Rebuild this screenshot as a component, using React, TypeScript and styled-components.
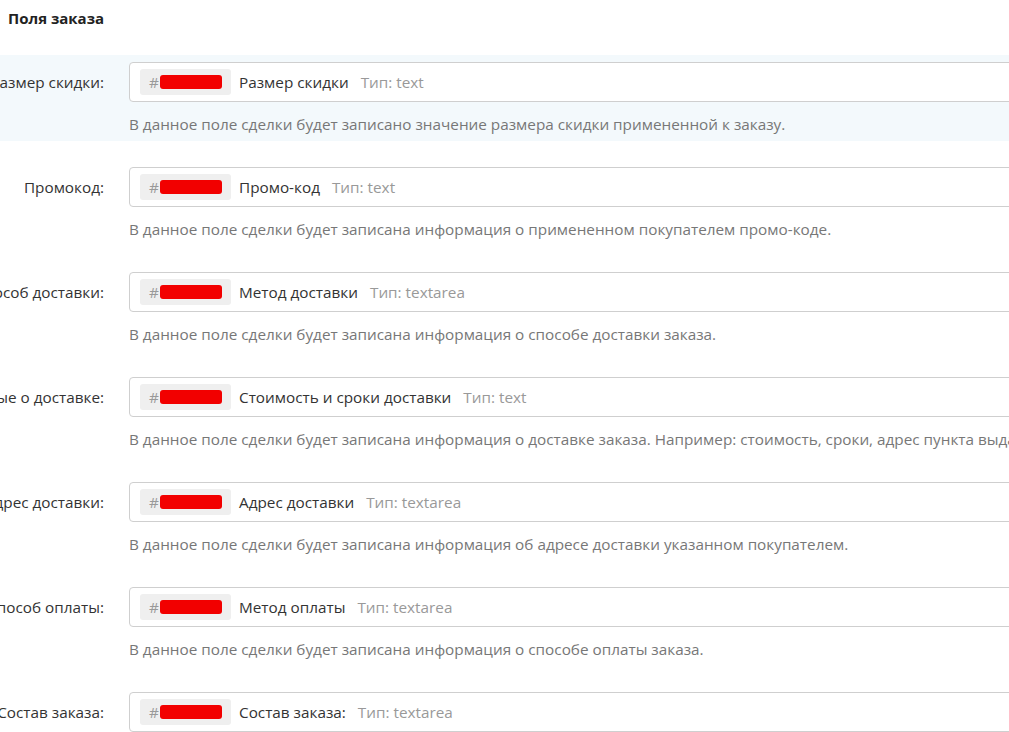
import React from "react"
import styled, { createGlobalStyle } from "styled-components"

type OrderField = {
  label: string
  name: string
  type: "text" | "textarea"
  hint: string
}

const fields: OrderField[] = [
  {
    label: "Размер скидки:",
    name: "Размер скидки",
    type: "text",
    hint: "В данное поле сделки будет записано значение размера скидки примененной к заказу.",
  },
  {
    label: "Промокод:",
    name: "Промо-код",
    type: "text",
    hint: "В данное поле сделки будет записана информация о примененном покупателем промо-коде.",
  },
  {
    label: "Способ доставки:",
    name: "Метод доставки",
    type: "textarea",
    hint: "В данное поле сделки будет записана информация о способе доставки заказа.",
  },
  {
    label: "Данные о доставке:",
    name: "Стоимость и сроки доставки",
    type: "text",
    hint: "В данное поле сделки будет записана информация о доставке заказа. Например: стоимость, сроки, адрес пункта выдачи.",
  },
  {
    label: "Адрес доставки:",
    name: "Адрес доставки",
    type: "textarea",
    hint: "В данное поле сделки будет записана информация об адресе доставки указанном покупателем.",
  },
  {
    label: "Способ оплаты:",
    name: "Метод оплаты",
    type: "textarea",
    hint: "В данное поле сделки будет записана информация о способе оплаты заказа.",
  },
  {
    label: "Состав заказа:",
    name: "Состав заказа:",
    type: "textarea",
    hint: "В данное поле сделки будет записан состав заказа.",
  },
]

const App: React.FC = () => {
  return (
    <>
      <GlobalStyle />
      <Page>
        <Title>Поля заказа</Title>
        <List>
          {fields.map((f, i) => (
            <Row key={f.label} $active={i === 0}>
              <Label>
                <span>{f.label}</span>
              </Label>
              <FieldBox>
                <IdChip>
                  #<Redacted />
                </IdChip>
                <FieldName>{f.name}</FieldName>
                <FieldType>Тип: {f.type}</FieldType>
              </FieldBox>
              <Hint>{f.hint}</Hint>
            </Row>
          ))}
        </List>
      </Page>
    </>
  )
}

const GlobalStyle = createGlobalStyle`
  html, body {
    margin: 0;
    overflow: hidden;
    background: #fff;
  }
  body {
    font-family: "Open Sans", "Noto Sans", sans-serif;
    font-size: 15.3px;
    color: #333;
  }
`

const Page = styled.div`
  width: 1200px;
`

const Title = styled.div`
  padding: 8px 8px 0;
  height: 55px;
  box-sizing: border-box;
  font-size: 15px;
  font-weight: 700;
  line-height: 20px;
  color: #222;
`

const List = styled.div`
  display: flex;
  flex-direction: column;
  gap: 19px;
`

const Row = styled.div<{ $active?: boolean }>`
  display: grid;
  grid-template-columns: 104px 1fr;
  column-gap: 25px;
  row-gap: 12px;
  padding: 7px 0;
  background: ${(p) => (p.$active ? "#f3f9fc" : "transparent")};
`

const Label = styled.div`
  display: flex;
  justify-content: flex-end;
  align-items: center;
  height: 40px;
  white-space: nowrap;
  color: #333;
`

const FieldBox = styled.div`
  display: flex;
  align-items: center;
  height: 40px;
  box-sizing: border-box;
  padding: 0 10px;
  border: 1px solid #cfcfcf;
  border-radius: 4px;
  background: #fff;
`

const IdChip = styled.span`
  display: inline-flex;
  align-items: center;
  height: 26px;
  width: 91px;
  box-sizing: border-box;
  padding: 0 9px;
  border-radius: 3px;
  background: #efefef;
  color: #999;
`

const Redacted = styled.span`
  display: inline-block;
  width: 62px;
  height: 14px;
  margin-left: 1px;
  border-radius: 3px;
  background: #f20000;
`

const FieldName = styled.span`
  margin-left: 8px;
  color: #333;
  white-space: nowrap;
`

const FieldType = styled.span`
  margin-left: 12px;
  color: #999;
  white-space: nowrap;
`

const Hint = styled.div`
  grid-column: 2;
  line-height: 20px;
  color: #777;
  white-space: nowrap;
`

export default App
